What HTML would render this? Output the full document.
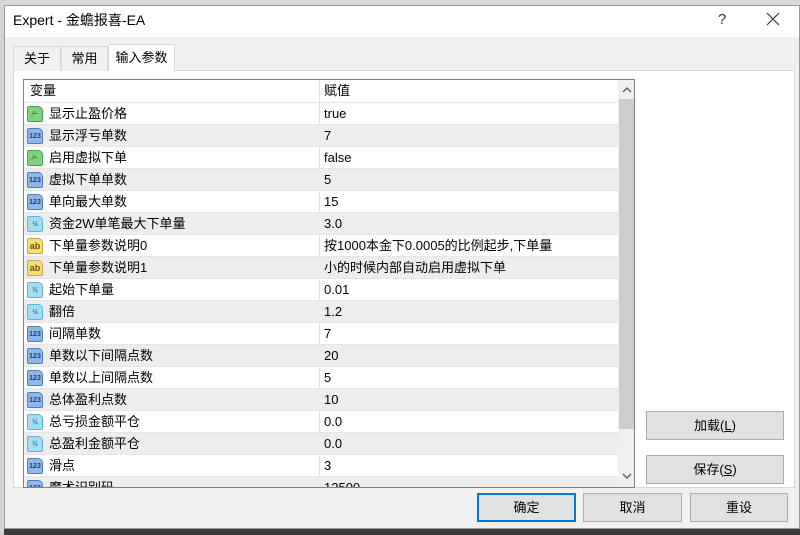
<!DOCTYPE html>
<html><head><meta charset="utf-8"><style>
*{margin:0;padding:0;box-sizing:border-box}
body{width:800px;height:535px;overflow:hidden;background:#3a3a3a;font-family:"Liberation Sans","Noto Sans CJK SC",sans-serif;font-size:13px;color:#000;position:relative}
.abs{position:absolute}
#topbg{left:0;top:0;width:800px;height:6px;background:#d8d8d8}
#leftbg{left:0;top:0;width:4px;height:535px;background:#cfd8cf}
#win{left:4px;top:5px;width:796px;height:524px;background:#f0f0f0;border:1px solid #9a9a9a}
#title{left:5px;top:6px;width:794px;height:31px;background:#fff}
.tab{top:46px;height:25px;line-height:24px;font-size:13px;text-align:center;border:1px solid #d9d9d9;border-bottom:none;background:#f0f0f0}
#panel{left:13px;top:70px;width:782px;height:418px;background:#fff;border:1px solid #d9d9d9}
#list{left:23px;top:79px;width:612px;height:409px;border:1px solid #828282;background:#fff;overflow:hidden}
.row{position:absolute;left:0;width:594px;height:22px;border-bottom:1px solid #e6e6e6}
.row.g{background:#ededed}
.row span{position:absolute;top:0;height:21px;line-height:21px;font-size:13px;white-space:nowrap}
.n{left:25px}.v{left:300px}
.cd{position:absolute;left:295px;top:0;width:1px;height:409px;background:#e0e0e0}
.ic{position:absolute;left:3px;top:3px;width:16px;height:16px;border-radius:2px 5px 2px 2px;font-size:7px;font-weight:bold;text-align:center;line-height:15px;font-family:"Liberation Sans",sans-serif}
.b{background:#7fd07f;border:1px solid #4aa54a;color:#1a6a1a}
.i{background:#8fb8e8;border:1px solid #4c7fc0;color:#173d80}
.d{background:#a6dcf2;border:1px solid #5cb3d8;color:#1f6f9a}
.s{background:#f2df7c;border:1px solid #c9a93a;color:#6a5200;font-size:9px}
#sb{left:594px;top:0;width:17px;height:407px;background:#f0f0f0}
#thumb{left:595px;top:19px;width:15px;height:330px;background:#cdcdcd}
.btn{background:#e1e1e1;border:1px solid #adadad;text-align:center;font-size:13px}
</style></head><body>
<div class="abs" id="topbg"></div><div class="abs" id="leftbg"></div>
<div class="abs" id="win"></div>
<div class="abs" id="title"></div>
<div class="abs" style="left:13px;top:11px;font-size:14px;line-height:18px">Expert - 金蟾报喜-EA</div>
<div class="abs" style="left:718px;top:11px;font-size:15px;color:#333;line-height:18px">?</div>
<svg class="abs" style="left:766px;top:12px" width="14" height="14"><path d="M1 1L13 13M13 1L1 13" stroke="#333" stroke-width="1.2"/></svg>
<div class="abs" id="panel"></div>
<div class="abs tab" style="left:13px;width:48px">关于</div>
<div class="abs tab" style="left:61px;width:47px">常用</div>
<div class="abs tab" style="left:108px;top:44px;height:27px;width:67px;background:#fff;line-height:26px">输入参数</div>
<div class="abs" id="list">
<div class="row" style="top:0;height:23px"><span style="left:6px">变量</span><span class="v">赋值</span></div>
<div class="cd"></div>
<div class="row" style="top:23px"><div class="ic b">⁄~</div><span class="n">显示止盈价格</span><span class="v">true</span></div>
<div class="row g" style="top:45px"><div class="ic i">123</div><span class="n">显示浮亏单数</span><span class="v">7</span></div>
<div class="row" style="top:67px"><div class="ic b">⁄~</div><span class="n">启用虚拟下单</span><span class="v">false</span></div>
<div class="row g" style="top:89px"><div class="ic i">123</div><span class="n">虚拟下单单数</span><span class="v">5</span></div>
<div class="row" style="top:111px"><div class="ic i">123</div><span class="n">单向最大单数</span><span class="v">15</span></div>
<div class="row g" style="top:133px"><div class="ic d">½</div><span class="n">资金2W单笔最大下单量</span><span class="v">3.0</span></div>
<div class="row" style="top:155px"><div class="ic s">ab</div><span class="n">下单量参数说明0</span><span class="v">按1000本金下0.0005的比例起步,下单量</span></div>
<div class="row g" style="top:177px"><div class="ic s">ab</div><span class="n">下单量参数说明1</span><span class="v">小的时候内部自动启用虚拟下单</span></div>
<div class="row" style="top:199px"><div class="ic d">½</div><span class="n">起始下单量</span><span class="v">0.01</span></div>
<div class="row g" style="top:221px"><div class="ic d">½</div><span class="n">翻倍</span><span class="v">1.2</span></div>
<div class="row" style="top:243px"><div class="ic i">123</div><span class="n">间隔单数</span><span class="v">7</span></div>
<div class="row g" style="top:265px"><div class="ic i">123</div><span class="n">单数以下间隔点数</span><span class="v">20</span></div>
<div class="row" style="top:287px"><div class="ic i">123</div><span class="n">单数以上间隔点数</span><span class="v">5</span></div>
<div class="row g" style="top:309px"><div class="ic i">123</div><span class="n">总体盈利点数</span><span class="v">10</span></div>
<div class="row" style="top:331px"><div class="ic d">½</div><span class="n">总亏损金额平仓</span><span class="v">0.0</span></div>
<div class="row g" style="top:353px"><div class="ic d">½</div><span class="n">总盈利金额平仓</span><span class="v">0.0</span></div>
<div class="row" style="top:375px"><div class="ic i">123</div><span class="n">滑点</span><span class="v">3</span></div>
<div class="row g" style="top:397px"><div class="ic i">123</div><span class="n">魔术识别码</span><span class="v">12500</span></div>
<div class="abs" id="sb"></div><div class="abs" id="thumb"></div>
<svg class="abs" style="left:598px;top:6px" width="10" height="8"><path d="M1 6L5 2L9 6" stroke="#555" fill="none" stroke-width="1.3"/></svg>
<svg class="abs" style="left:598px;top:392px" width="10" height="8"><path d="M1 2L5 6L9 2" stroke="#555" fill="none" stroke-width="1.3"/></svg>
</div>
<div class="abs btn" style="left:646px;top:411px;width:138px;height:29px;line-height:27px">加载(<u>L</u>)</div>
<div class="abs btn" style="left:646px;top:455px;width:138px;height:29px;line-height:27px">保存(<u>S</u>)</div>
<div class="abs btn" style="left:477px;top:493px;width:99px;height:29px;line-height:26px;border:2px solid #0078d7">确定</div>
<div class="abs btn" style="left:583px;top:493px;width:99px;height:29px;line-height:27px">取消</div>
<div class="abs btn" style="left:690px;top:493px;width:98px;height:29px;line-height:27px">重设</div>
</body></html>
